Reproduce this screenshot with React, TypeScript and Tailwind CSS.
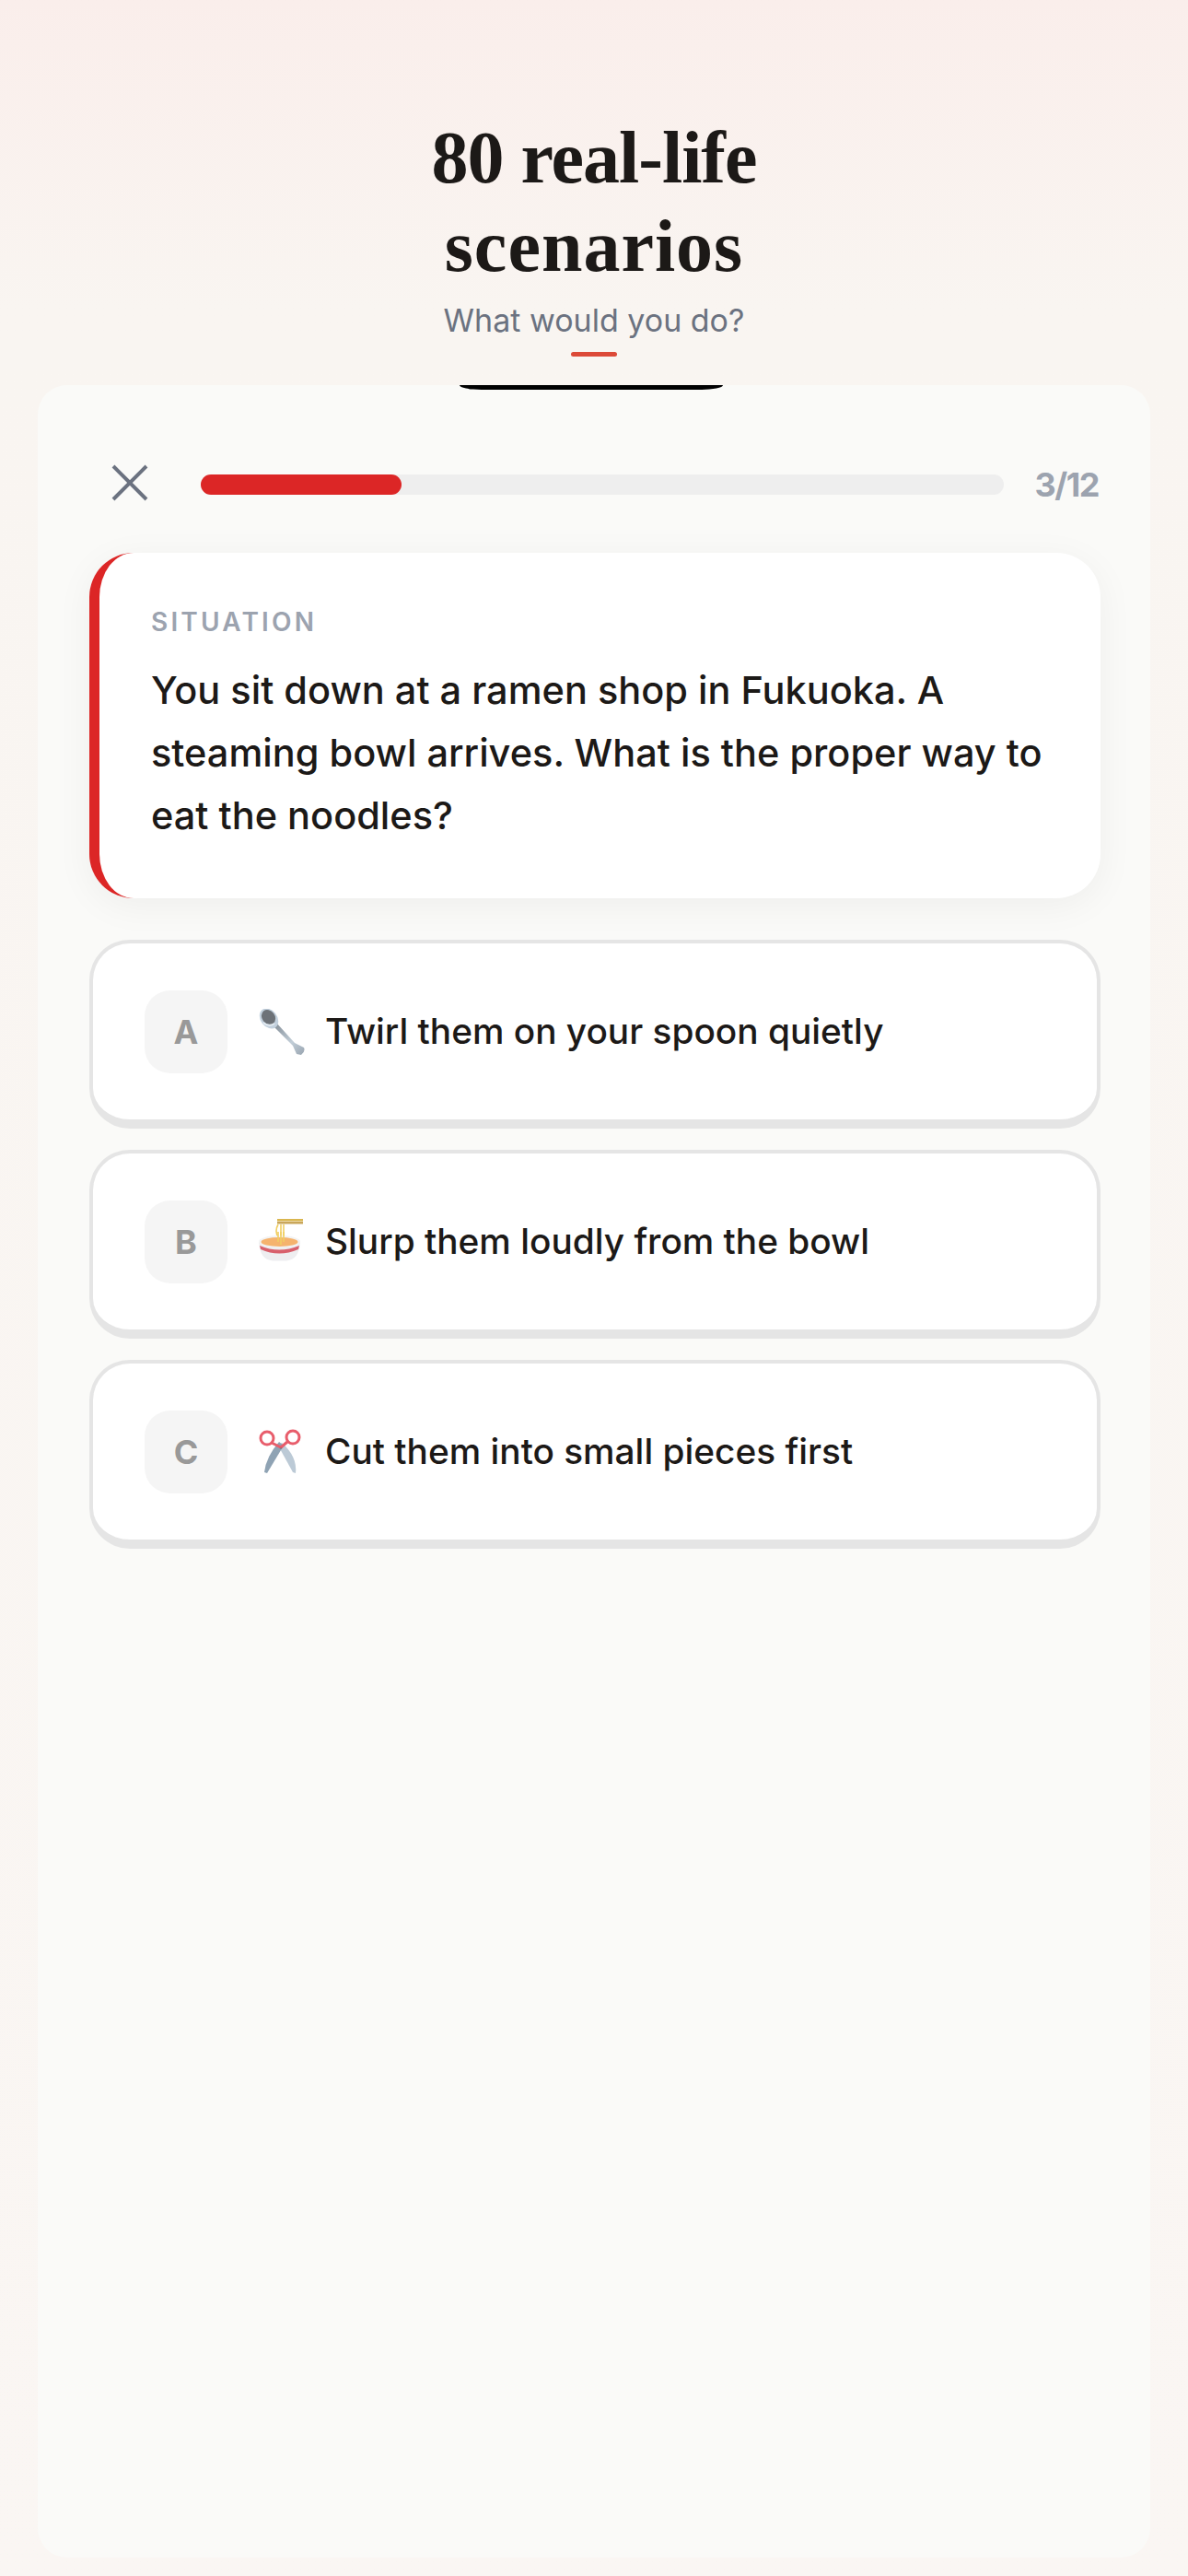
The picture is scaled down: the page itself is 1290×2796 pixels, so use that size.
import React from 'react';

const SpoonIcon: React.FC = () => (
  <svg width="50" height="50" viewBox="0 0 50 50" aria-hidden="true">
    <defs>
      <linearGradient id="spoonHandle" x1="0" y1="0" x2="1" y2="1">
        <stop offset="0" stopColor="#7f8992" />
        <stop offset="0.6" stopColor="#c2ced8" />
        <stop offset="1" stopColor="#98a4b0" />
      </linearGradient>
    </defs>
    <path d="M15 18 L19 15 L39 37 L49 42 Q51 46 46 50 L41 49 L37 40 Z" fill="url(#spoonHandle)" />
    <ellipse cx="11" cy="10.5" rx="9" ry="12" transform="rotate(-38 11 10.5)" fill="#c3d1de" />
    <ellipse cx="10.5" cy="9" rx="7" ry="8.5" transform="rotate(-38 10.5 9)" fill="#6d7278" />
    <path d="M5 15 Q11 20 17 16" stroke="#e4ecf2" strokeWidth="1.8" fill="none" />
  </svg>
);

const BowlIcon: React.FC = () => (
  <svg width="50" height="50" viewBox="0 0 50 50" aria-hidden="true">
    <rect x="20" y="0" width="28" height="2.5" fill="#d9b64f" />
    <rect x="20" y="3" width="28" height="2.5" fill="#c9a65a" />
    <path d="M21 6 Q17 13 21 20 M24 6 V20 M27 6 V20" stroke="#f1cf63" strokeWidth="1.6" fill="none" />
    <path d="M0 25 Q1 44 15 45.5 H30 Q44 44 45 25 Z" fill="#eeeef0" />
    <path d="M1 29 Q22 38 44 29 L43 33 Q22 42 2 33 Z" fill="#d8606c" />
    <ellipse cx="22.5" cy="24.5" rx="22.5" ry="6.5" fill="#f3f3f3" />
    <ellipse cx="22.5" cy="25" rx="20" ry="5" fill="#f5b36e" />
    <path d="M21 14 V25 M24 14 V28 M27 14 V25" stroke="#f1cf63" strokeWidth="1.6" fill="none" />
  </svg>
);

const ScissorsIcon: React.FC = () => (
  <svg width="50" height="50" viewBox="0 0 50 50" aria-hidden="true">
    <path d="M21 18 L25 15 Q42 30 40 48 L37 47 Z" fill="#bccad6" />
    <path d="M27 18 L22 14 Q8 30 6 47 L9 48 Z" fill="#8fa3b4" />
    <circle cx="24" cy="20" r="1.5" fill="#56626d" />
    <path d="M24 20 L14 15" stroke="#e85d6b" strokeWidth="3" />
    <path d="M24 20 L31 14" stroke="#e85d6b" strokeWidth="3" />
    <circle cx="9" cy="10" r="7" fill="none" stroke="#e85d6b" strokeWidth="3" />
    <circle cx="37" cy="9" r="7" fill="none" stroke="#e85d6b" strokeWidth="3" />
  </svg>
);

const options = [
  { letter: 'A', icon: <SpoonIcon />, text: 'Twirl them on your spoon quietly' },
  { letter: 'B', icon: <BowlIcon />, text: 'Slurp them loudly from the bowl' },
  { letter: 'C', icon: <ScissorsIcon />, text: 'Cut them into small pieces first' },
];

const App: React.FC = () => {
  return (
    <div className="flex flex-col min-h-[2796px] bg-gradient-to-b from-[#faeeeb] via-[#f9f5f1] via-[12%] to-[#faf6f3] font-['Inter',sans-serif] pb-[20px]">
      <header className="flex flex-col items-center pt-[123px] h-[418px] flex-shrink-0">
        <h1 className="font-['Liberation_Serif',serif] font-bold text-[80px] leading-[96px] text-[#1c1917] text-center">
          <span className="tracking-[-1px]">80 real-life</span>
          <br />
          <span className="tracking-[1px]">scenarios</span>
        </h1>
        <p className="mt-[13px] text-[34px] leading-[40px] text-[#6b7280]">What would you do?</p>
        <div className="mt-[14px] w-[50px] h-[5px] rounded-full bg-[#dc4a38]"></div>
      </header>

      <main className="flex flex-col flex-1 mx-[41px] bg-[#fafaf8] rounded-[32px] pl-[56px] pr-[54px]">
        <div className="self-center w-[286px] h-[5px] bg-black rounded-b-[24px_5px] -translate-x-[4px]"></div>

        <div className="flex items-center mt-[81px] h-[44px]">
          <button className="ml-[24px] w-[40px] h-[40px] flex-shrink-0 -translate-y-[2px]">
            <svg width="40" height="40" viewBox="0 0 40 40" fill="none" stroke="#6b7280" strokeWidth="4">
              <path d="M2 2 L38 38 M38 2 L2 38" />
            </svg>
          </button>
          <div className="flex-1 ml-[57px] h-[22px] rounded-full bg-[#eeeeee]">
            <div className="w-1/4 h-full rounded-full bg-[#dc2626]"></div>
          </div>
          <span className="ml-[34px] mr-[2px] text-[36px] font-bold tracking-[-1.5px] text-[#9ca3af]">3/12</span>
        </div>

        <section className="mt-[52px] h-[375px] bg-white rounded-[48px] border-l-[11px] border-[#dc2626] pl-[56px] pt-[58px] shadow-[0_8px_40px_rgba(0,0,0,0.05)]">
          <div className="text-[28px] leading-[34px] font-semibold tracking-[3.2px] text-[#9ca3af]">SITUATION</div>
          <p className="mt-[23px] text-[41.5px] leading-[68px] font-medium text-[#1c1917]">
            You sit down at a ramen shop in Fukuoka. A
            <br />
            steaming bowl arrives. What is the proper way to
            <br />
            eat the noodles?
          </p>
        </section>

        <div className="flex flex-col gap-[23px] mt-[45px]">
          {options.map((o) => (
            <button
              key={o.letter}
              className="flex items-center h-[205px] bg-white rounded-[44px] border-[4px] border-b-[10px] border-[#e5e5e5] pl-[56px] text-left"
            >
              <span className="flex items-center justify-center w-[90px] h-[90px] rounded-[28px] bg-[#f5f5f5] text-[36px] font-bold text-[#999999]">
                {o.letter}
              </span>
              <span className="ml-[34px] flex-shrink-0">{o.icon}</span>
              <span className="ml-[22px] text-[38.8px] font-medium text-[#1c1917]">{o.text}</span>
            </button>
          ))}
        </div>
      </main>
    </div>
  );
};

export default App;
